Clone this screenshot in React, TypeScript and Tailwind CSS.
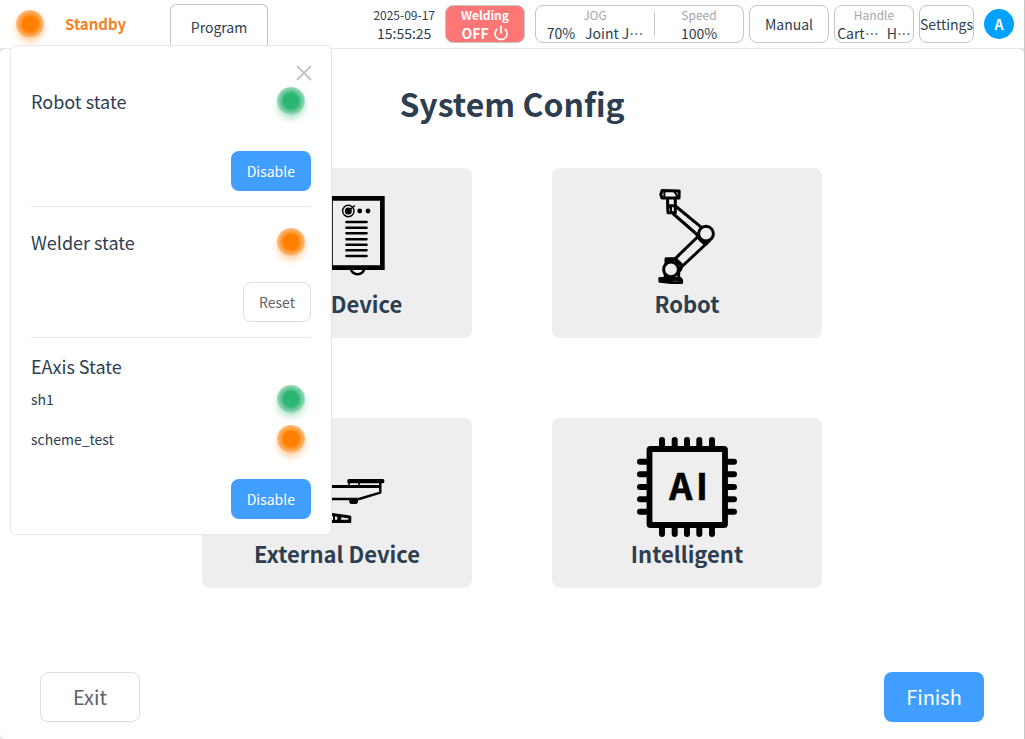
import React from 'react';
import { Power, X } from 'lucide-react';
import clsx from 'clsx';

type StatusColor = 'green' | 'orange';

const StatusLight: React.FC<{ color: StatusColor }> = ({ color }) => (
  <span
    className={clsx(
      'flex h-7 w-7 shrink-0 items-center justify-center rounded-full',
      color === 'green'
        ? 'bg-[radial-gradient(circle_closest-side,#2bb673_50%,#a0dabe_100%)] shadow-[0_4px_6px_rgba(43,182,115,0.35)]'
        : 'bg-[radial-gradient(circle_closest-side,#ff8000_50%,#fdbf85_100%)] shadow-[0_4px_6px_rgba(255,128,0,0.35)]'
    )}
  >
    <span className={clsx('h-4 w-4 rounded-full', color === 'green' ? 'bg-[#2bb673]' : 'bg-[#ff8000]')} />
  </span>
);

const WeldDeviceIcon = () => (
  <svg viewBox="0 0 100 100" className="h-[100px] w-[100px]" fill="none" stroke="#000">
    <path d="M64 81.5a6.6 5.8 0 0 0 13.2 0z" fill="#fff" strokeWidth="2.6" />
    <path d="M4 9h93.7v74H4zM8 13.7v64.6h34V13.7zM45.8 13.7v64.6H93V13.7z" fill="#000" fillRule="evenodd" stroke="none" />
    <circle cx="61.3" cy="24" r="5.7" strokeWidth="1.4" />
    <circle cx="61.3" cy="24" r="3.5" fill="#000" stroke="none" />
    <path d="M61.3 24l6.5-5.5" strokeWidth="1.5" />
    <circle cx="72.7" cy="24" r="2.4" fill="#000" stroke="none" />
    <circle cx="81" cy="24" r="2.4" fill="#000" stroke="none" />
    <path
      d="M59.5 35h20M59.5 40.7h20M59.5 46.3h20M59.5 52.2h20M59.5 57.7h20M59.5 63.3h20M59.5 69h20"
      strokeWidth="2.6"
      strokeLinecap="round"
    />
  </svg>
);

const RobotIcon = () => (
  <svg
    viewBox="0 0 100 100"
    className="h-[100px] w-[100px]"
    fill="none"
    stroke="#000"
    strokeWidth="3"
    strokeLinejoin="round"
    strokeLinecap="round"
  >
    <path d="M25 3.6L23.8 7.5l1.2 3.6H42L42.2 4z" />
    <path d="M27.4 3.6v7.5M37 4l2.2 3.4 2 3.7" strokeWidth="2" />
    <path d="M30.6 12v7.2L31 25.7h7.3V12M30.6 18.7h8" />
    <path d="M31 20.5h3v5" strokeWidth="2" />
    <path d="M39 19.5l26 21.3M36.5 27L60 47.5" />
    <path d="M59.8 47.5c2 4.5 4 7.5 9.2 9.8l3-3" />
    <path d="M61.5 49L38 71.8M68.5 57.5L45 79.5M62 51l6 5.5" />
    <circle cx="69" cy="46.7" r="7.4" fill="#eee" />
    <path d="M29 79v-7.2h9.5l6.3 6-.8 4-2.3 3.5v6M29 75l10-3.2M38.5 72l3.5 9" />
    <path d="M28.2 85v6" />
    <circle cx="34" cy="82.3" r="7.4" fill="#eee" />
    <path d="M22.8 91.4h20.5l1.3 1.8v2.2H34l-11-1.1z" fill="#000" />
    <path d="M36 94.3h5" stroke="#777" strokeWidth="0.6" />
  </svg>
);

const ExternalDeviceIcon = () => (
  <svg viewBox="0 0 100 100" className="h-[100px] w-[100px]" fill="none" stroke="#000" strokeLinejoin="round">
    <rect x="60.3" y="42" width="37" height="4.2" rx="1.5" fill="#000" stroke="none" />
    <path d="M62 46v3M72 46v3" strokeWidth="1.6" />
    <path d="M4 49.5h89" strokeWidth="3" />
    <path d="M93.3 45.5V55.6L72 62H4V49" strokeWidth="2.4" />
    <path d="M62.3 62.5h8.6v2.8l-1.4 1.6h-5.8l-1.4-1.6z" fill="#000" stroke="none" />
    <path d="M10 77.5h35l17.8 2.6v4.3H10z" strokeWidth="3" />
    <path d="M47 77.5v7M51.3 78v6.5M53.5 80l-.8 4M46 83.7h16" strokeWidth="2" />
  </svg>
);

const IntelligentIcon = () => (
  <svg viewBox="0 0 100 100" className="h-[100px] w-[100px]" fill="none" stroke="#000">
    <rect x="12.5" y="12" width="75.5" height="76" rx="1" strokeWidth="5.8" />
    <path
      d="M25 3v7M37.7 3v7M50 3v7M62.3 3v7M75 3v7M25 90v7M37.7 90v7M50 90v7M62.3 90v7M75 90v7M3 24.7h7M3 37.3h7M3 50h7M3 62.3h7M3 74.7h7M90 24.7h7M90 37.3h7M90 50h7M90 62.3h7M90 74.7h7"
      strokeWidth="6"
      strokeLinecap="round"
    />
    <g fill="#000" stroke="#000" strokeWidth="0.6" fontSize="36" fontWeight="700" textAnchor="middle">
      <text x="43.7" y="63">A</text>
      <text x="65" y="63">I</text>
    </g>
  </svg>
);

const cards = [
  { title: 'Weld Device', icon: WeldDeviceIcon },
  { title: 'Robot', icon: RobotIcon },
  { title: 'External Device', icon: ExternalDeviceIcon },
  { title: 'Intelligent', icon: IntelligentIcon },
];

const axes: { name: string; color: StatusColor }[] = [
  { name: 'sh1', color: 'green' },
  { name: 'scheme_test', color: 'orange' },
];

const boxClass = 'h-[38px] shrink-0 rounded-lg border border-[#c4c4c4] bg-white';
const primaryClass = 'h-10 rounded-lg bg-[#409eff] px-4 text-sm text-white';
const plainClass = 'h-10 rounded-lg border border-[#dcdfe6] bg-white px-[15px] text-sm text-[#606266]';

const TopBar: React.FC = () => (
  <header className="flex h-[49px] items-center border-b border-[#e6e6e6] bg-white pr-2.5 pl-4">
    <StatusLight color="orange" />
    <span className="ml-[21px] w-[105px] text-[15px] font-bold text-[#f5821f]">Standby</span>
    <button className="h-11 w-[98px] shrink-0 self-end rounded-t-md border border-b-0 border-[#c4c4c4] bg-white">
      Program
    </button>

    <div className="ml-auto flex items-center">
      <div className="mr-2.5 text-center">
        <div className="text-xs leading-[18px]">2025-09-17</div>
        <div className="leading-[18px]">15:55:25</div>
      </div>
      <button className="mr-2.5 h-[38px] w-20 shrink-0 rounded-lg border border-[#c4c4c4] bg-[#ff7676] font-bold text-white">
        <span className="block text-xs leading-[18px]">Welding</span>
        <span className="flex items-center justify-center gap-1 leading-[18px]">
          OFF
          <Power className="h-4 w-4" strokeWidth={2.5} />
        </span>
      </button>
      <button className={clsx(boxClass, 'mr-[5px] flex w-[209px] items-center')}>
        <span className="w-[118px]">
          <span className="block text-xs leading-[18px] text-[#a3a6ab]">JOG</span>
          <span className="flex justify-center gap-2.5 leading-[18px]" lang="zh-CN">
            <span>70%</span>
            <span>Joint J…</span>
          </span>
        </span>
        <span className="h-6 w-px bg-[#c4c4c4]" />
        <span className="flex-1">
          <span className="block text-xs leading-[18px] text-[#a3a6ab]">Speed</span>
          <span className="block leading-[18px]">100%</span>
        </span>
      </button>
      <button className={clsx(boxClass, 'mr-[5px] w-20')}>Manual</button>
      <button className={clsx(boxClass, 'mr-[5px] w-20')}>
        <span className="block text-xs leading-[18px] text-[#a3a6ab]">Handle</span>
        <span className="flex justify-center gap-2 leading-[18px]" lang="zh-CN">
          <span>Cart…</span>
          <span>H…</span>
        </span>
      </button>
      <button className={clsx(boxClass, 'mr-2.5 flex w-[55px] items-center justify-center')}>Settings</button>
      <button className="h-[30px] w-[30px] shrink-0 rounded-full bg-[#00a2ff] font-bold text-white">A</button>
    </div>
  </header>
);

const StatePanel: React.FC = () => (
  <aside className="absolute top-[45px] left-2.5 w-[322px] rounded-md border border-[#e6e6e6] bg-white px-5">
    <button aria-label="Close" className="absolute top-3.5 right-3.5 text-[#c4c4c4]">
      <X className="h-[26px] w-[26px]" strokeWidth={1.75} />
    </button>

    <section className="border-b border-[#e6e6e6] pt-[35px] pb-[15px]">
      <div className="flex h-10 items-center justify-between pr-1.5">
        <h2 className="text-lg">Robot state</h2>
        <StatusLight color="green" />
      </div>
      <div className="mt-[30px] flex justify-end">
        <button className={primaryClass}>Disable</button>
      </div>
    </section>

    <section className="border-b border-[#e6e6e6] py-[15px]">
      <div className="flex h-10 items-center justify-between pr-1.5">
        <h2 className="text-lg">Welder state</h2>
        <StatusLight color="orange" />
      </div>
      <div className="mt-5 flex justify-end">
        <button className={plainClass}>Reset</button>
      </div>
    </section>

    <section className="py-[15px]">
      <h2 className="text-lg leading-[26px]">EAxis State</h2>
      {axes.map((axis) => (
        <div key={axis.name} className="flex h-10 items-center justify-between pr-1.5">
          <span>{axis.name}</span>
          <StatusLight color={axis.color} />
        </div>
      ))}
      <div className="mt-5 flex justify-end">
        <button className={primaryClass}>Disable</button>
      </div>
    </section>
  </aside>
);

export default function App() {
  return (
    <div className="relative flex min-h-screen flex-col border-r border-[#c8c8c8] bg-[#e8e8e8] font-['Noto_Sans_CJK_SC',sans-serif] text-sm text-[#2c3e50]">
      <TopBar />

      <main className="flex flex-1 flex-col rounded-md rounded-br-none bg-white">
        <h1 className="mt-8 text-center text-[32px] leading-[45px] font-bold">System Config</h1>
        <div className="mt-[42px] grid grid-cols-[270px_270px] justify-center gap-20">
          {cards.map(({ title, icon: Icon }) => (
            <button key={title} className="flex h-[170px] flex-col items-center justify-center rounded-lg bg-[#eee]">
              <Icon />
              <span className="text-[22px] leading-8 font-bold">{title}</span>
            </button>
          ))}
        </div>
        <footer className="mt-auto flex justify-between px-10 pb-[17px] text-xl">
          <button className="h-[50px] w-[100px] rounded-lg border border-[#dcdfe6] bg-white text-[#606266]">Exit</button>
          <button className="h-[50px] w-[100px] rounded-lg bg-[#409eff] text-white">Finish</button>
        </footer>
      </main>

      <StatePanel />
    </div>
  );
}
